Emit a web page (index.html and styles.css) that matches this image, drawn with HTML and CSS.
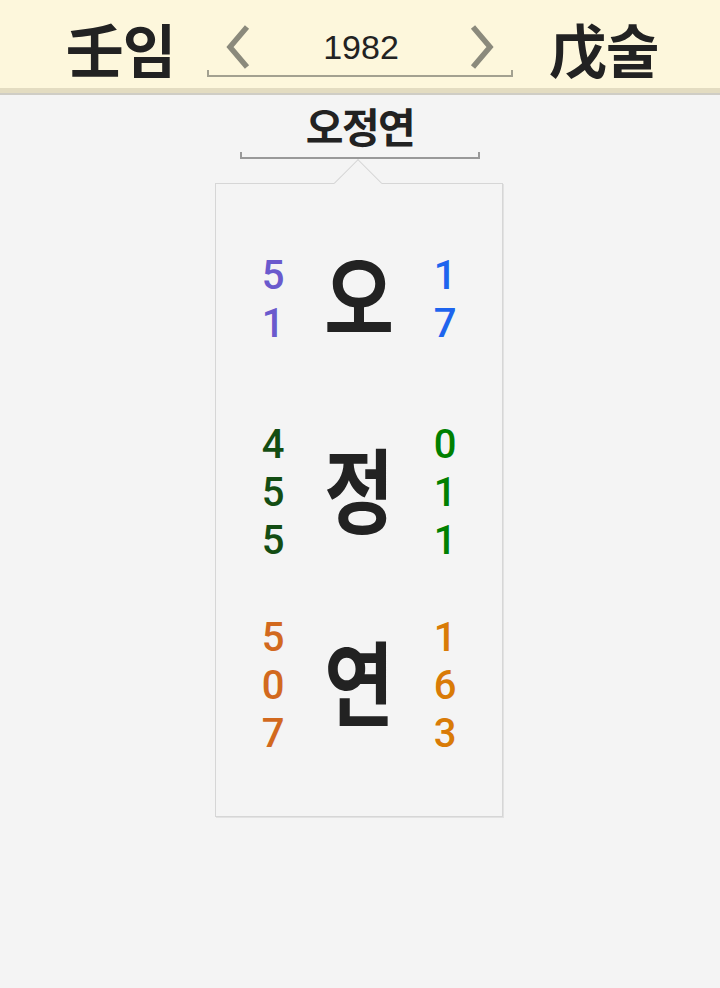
FILE: index.html
```html
<!DOCTYPE html>
<html lang="ko">
<head>
<meta charset="utf-8">
<link rel="stylesheet" href="styles.css">
</head>
<body>
<header class="top">
  <div class="ganji">壬임</div>
  <div class="year-nav">
    <div class="year-row">
      <svg class="chev" width="24" height="44" viewBox="0 0 24 44"><polyline points="21,2 4,22 21,42" fill="none" stroke="#8b8a7c" stroke-width="5.5"/></svg>
      <span class="year">1982</span>
      <svg class="chev" width="24" height="44" viewBox="0 0 24 44"><polyline points="3,2 20,22 3,42" fill="none" stroke="#8b8a7c" stroke-width="5.5"/></svg>
    </div>
    <div class="bracket year-bracket"></div>
  </div>
  <div class="ganji">戊술</div>
</header>
<main class="content">
  <div class="name-block">
    <div class="name">오정연</div>
    <div class="bracket name-bracket"></div>
  </div>
  <section class="card">
    <span class="notch"></span>
    <div class="row">
      <div class="nums c-purple"><span>5</span><span>1</span></div>
      <div class="glyph">오</div>
      <div class="nums c-blue"><span>1</span><span>7</span></div>
    </div>
    <div class="row">
      <div class="nums c-dgreen"><span>4</span><span>5</span><span>5</span></div>
      <div class="glyph">정</div>
      <div class="nums c-green"><span>0</span><span>1</span><span>1</span></div>
    </div>
    <div class="row">
      <div class="nums c-orange"><span>5</span><span>0</span><span>7</span></div>
      <div class="glyph">연</div>
      <div class="nums c-amber"><span>1</span><span>6</span><span>3</span></div>
    </div>
  </section>
</main>
</body>
</html>
```
FILE: styles.css
```css
* { box-sizing: border-box; }
html, body { margin: 0; padding: 0; }
body {
  background: #f4f4f4;
  font-family: "Noto Sans CJK KR", "Noto Sans", sans-serif;
  color: #222;
  width: 720px;
  height: 988px;
  overflow: hidden;
}
.top {
  height: 93px;
  background: #fdf7dc;
  border-bottom: 5px solid #e3dcc1;
  box-shadow: 0 2px 0 #cfcdc5;
  display: flex;
  justify-content: center;
  align-items: flex-start;
  gap: 34px;
}
.ganji {
  font-size: 58px;
  font-weight: 700;
  line-height: 96px;
  height: 88px;
  letter-spacing: -1px;
  color: #222;
  transform: translateX(2px);
}
.year-nav {
  width: 306px;
  margin-top: 23px;
  display: flex;
  flex-direction: column;
}
.year-row {
  height: 47px;
  display: flex;
  justify-content: space-between;
  align-items: center;
  padding: 0 19px 0 19px;
}
.year {
  font-family: "Liberation Sans", Arial, sans-serif;
  font-size: 34px;
  color: #222;
  line-height: 1;
  padding-left: 2px;
}
.bracket {
  height: 7px;
  border: 2px solid #a3a190;
  border-top: none;
}
.content {
  display: flex;
  flex-direction: column;
  align-items: center;
  padding-top: 5px;
}
.name-block {
  width: 240px;
  display: flex;
  flex-direction: column;
  align-items: center;
}
.name {
  font-size: 41px;
  font-weight: 700;
  line-height: 54px;
  letter-spacing: -1.5px;
}
.name-bracket {
  width: 240px;
  border-color: #999;
}
.card {
  position: relative;
  margin-top: 24px;
  margin-right: 2px;
  width: 288px;
  height: 634px;
  border: 1px solid #d6d6d6;
  box-shadow: 1px 1px 0 #e2e2e2;
  padding: 19px 34px 0;
  background: #f4f4f4;
}
.notch {
  position: absolute;
  left: 125px;
  top: -18px;
  width: 34px;
  height: 34px;
  background: #f4f4f4;
  border-top: 1px solid #d6d6d6;
  border-left: 1px solid #d6d6d6;
  transform: rotate(45deg);
}
.row {
  height: 193px;
  display: grid;
  grid-template-columns: 46px 1fr 46px;
  align-items: center;
}
.nums {
  display: flex;
  flex-direction: column;
  align-items: center;
  font-family: Roboto, "Noto Sans", sans-serif;
  font-weight: 500;
  font-size: 40px;
  line-height: 48px;
}
.glyph {
  text-align: center;
  font-size: 88px;
  font-weight: 700;
  line-height: 1;
  padding-bottom: 12px;
  transform: scale(0.86, 1.04);
}
.c-purple { color: #6a5acd; }
.c-blue { color: #1e64ee; }
.c-dgreen { color: #134d13; }
.c-green { color: #008000; }
.c-orange { color: #d2691e; }
.c-amber { color: #d97b06; }
```
